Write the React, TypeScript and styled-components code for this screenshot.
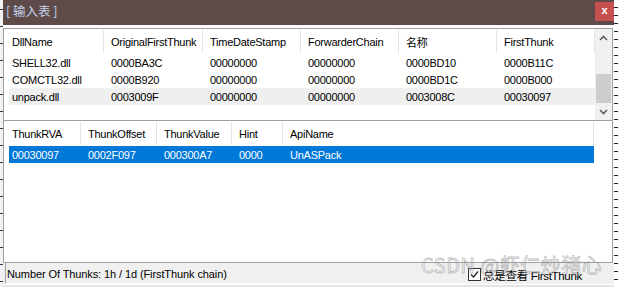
import React from "react";
import styled, { createGlobalStyle } from "styled-components";

const UI = `"Liberation Sans", "Noto Sans CJK SC", Arial, sans-serif`;
const CJK = `"Noto Sans CJK SC", "Liberation Sans", sans-serif`;

const Global = createGlobalStyle`
  html, body { margin: 0; padding: 0; background: #ffffff; }
  body { font-family: ${UI}; font-size: 11px; letter-spacing: -0.25px; color: #000; }
  * { box-sizing: border-box; }
`;

const Screen = styled.div`
  position: relative;
  width: 618px;
  height: 287px;
  display: flex;
  overflow: hidden;
`;

const LeftEdge = styled.div`
  width: 3px;
  background: repeating-linear-gradient(180deg, #f2f2f2 0 9px, #3a3a3a 9px 10px, #f2f2f2 10px 17px);
`;

const RightEdge = styled.div`
  width: 4px;
  background: repeating-linear-gradient(180deg, #ffffff 0 7px, #202020 7px 8px);
`;

const Dialog = styled.div`
  width: 611px;
  display: flex;
  flex-direction: column;
  background: #fbfbfb;
`;

const TitleBar = styled.div`
  height: 25px;
  flex: none;
  background: #5e4a48;
  display: flex;
  align-items: center;
  justify-content: space-between;
  padding-left: 3px;
`;

const TitleText = styled.span`
  font-family: ${CJK};
  font-size: 12.5px;
  color: #c3d4ee;
  letter-spacing: 0;
  line-height: 1;
  margin-top: -2px;
`;

const CloseButton = styled.div`
  width: 19px;
  height: 19px;
  margin-top: -3px;
  background: #c65050;
  color: #ffffff;
  font-family: "Liberation Sans", sans-serif;
  font-weight: bold;
  font-size: 11px;
  letter-spacing: 0;
  display: flex;
  align-items: center;
  justify-content: center;
  padding-bottom: 2px;
`;

const Spacer = styled.div`
  height: 3px;
  flex: none;
  background: #fbfbfb;
`;

const ListBox = styled.div<{ $h: number; $bottom?: boolean }>`
  height: ${(p) => p.$h}px;
  flex: none;
  border: 1px solid #a0a0a0;
  border-bottom: ${(p) => (p.$bottom ? "1px solid #a0a0a0" : "none")};
  margin-right: 1px;
  background: #ffffff;
  display: flex;
`;

const ListMain = styled.div`
  flex: 1;
  display: flex;
  flex-direction: column;
`;

const HeaderRow = styled.div`
  height: 25px;
  display: flex;
  flex: none;
`;

const HeaderCell = styled.div<{ $w: number; $pl: number }>`
  position: relative;
  width: ${(p) => p.$w}px;
  flex: none;
  padding-left: ${(p) => p.$pl}px;
  display: flex;
  align-items: center;
  white-space: nowrap;
  overflow: hidden;
  color: #000;
  &::after {
    content: "";
    position: absolute;
    right: 0;
    top: 1px;
    bottom: 1px;
    width: 1px;
    background: #e5e5e5;
  }
`;

const Row = styled.div<{ $bg?: string; $fg?: string }>`
  height: 17px;
  display: flex;
  flex: none;
  margin-left: 5px;
  background: ${(p) => p.$bg || "transparent"};
  color: ${(p) => p.$fg || "#000"};
`;

const Cell = styled.div<{ $w: number; $pl: number }>`
  width: ${(p) => p.$w}px;
  flex: none;
  padding-left: ${(p) => p.$pl}px;
  display: flex;
  align-items: center;
  white-space: nowrap;
`;

const Scrollbar = styled.div`
  width: 17px;
  flex: none;
  background: #f0f0f0;
  display: flex;
  flex-direction: column;
  align-items: center;
`;

const ScrollArrow = styled.div`
  height: 17px;
  width: 100%;
  flex: none;
  display: flex;
  align-items: center;
  justify-content: center;
`;

const ScrollTrack = styled.div`
  flex: 1;
  width: 100%;
  display: flex;
  flex-direction: column;
  justify-content: flex-end;
  padding: 0 1px;
`;

const ScrollThumb = styled.div`
  height: 29px;
  width: 100%;
  background: #cdcdcd;
`;

const SideGap = styled.div`
  width: 18px;
  flex: none;
`;

const StatusBar = styled.div`
  height: 21px;
  flex: none;
  background: #f0f0f0;
  display: flex;
  align-items: center;
  padding-left: 2px;
`;

const StatusPanel = styled.div`
  height: 100%;
  width: 460px;
  border-left: 1px solid #a0a0a0;
  border-bottom: 1px solid #ffffff;
  display: flex;
  align-items: center;
  padding-left: 1px;
  padding-top: 1px;
  letter-spacing: -0.1px;
`;

const CheckWrap = styled.label`
  display: flex;
  align-items: center;
  gap: 2px;
  margin-left: 3px;
  padding-top: 2px;
`;

const CheckText = styled.span`
  font-family: ${UI};
  font-size: 11.5px;
  letter-spacing: -0.3px;
`;

const BottomStrip = styled.div`
  flex: 1;
  background: #e4e4e4;
  border-top: 1px solid #ffffff;
`;

const Watermark = styled.div`
  position: absolute;
  left: 421px;
  top: 255px;
  font-family: ${CJK};
  font-size: 20px;
  line-height: 1;
  color: rgba(255, 255, 255, 0.3);
  -webkit-text-stroke: 0.8px rgba(110, 110, 110, 0.45);
  letter-spacing: 0.5px;
  white-space: nowrap;
  pointer-events: none;
`;

type Col = { label: string; w: number };

const topCols: Col[] = [
  { label: "DllName", w: 100 },
  { label: "OriginalFirstThunk", w: 99 },
  { label: "TimeDateStamp", w: 98 },
  { label: "ForwarderChain", w: 98 },
  { label: "名称", w: 98 },
  { label: "FirstThunk", w: 98 },
];

const topRows = [
  ["SHELL32.dll", "0000BA3C", "00000000", "00000000", "0000BD10", "0000B11C"],
  ["COMCTL32.dll", "0000B920", "00000000", "00000000", "0000BD1C", "0000B000"],
  ["unpack.dll", "0003009F", "00000000", "00000000", "0003008C", "00030097"],
];

const bottomCols: Col[] = [
  { label: "ThunkRVA", w: 77 },
  { label: "ThunkOffset", w: 76 },
  { label: "ThunkValue", w: 75 },
  { label: "Hint", w: 51 },
  { label: "ApiName", w: 311 },
];

const bottomRows = [["00030097", "0002F097", "000300A7", "0000", "UnASPack"]];

const Chevron = ({ up }: { up?: boolean }) => (
  <svg width="9" height="6" viewBox="0 0 9 6">
    <path
      d={up ? "M1 5 L4.5 1.5 L8 5" : "M1 1 L4.5 4.5 L8 1"}
      fill="none"
      stroke="#606060"
      strokeWidth="1.6"
    />
  </svg>
);

const CheckIcon = () => (
  <svg width="13" height="13" viewBox="0 0 13 13">
    <rect x="0.5" y="0.5" width="12" height="12" fill="#ffffff" stroke="#333333" />
    <path d="M3 6.5 L5.5 9 L10 3.5" fill="none" stroke="#222222" strokeWidth="1.3" />
  </svg>
);

const Header = ({ cols }: { cols: Col[] }) => (
  <HeaderRow>
    {cols.map((c, i) => (
      <HeaderCell key={c.label} $w={c.w} $pl={i === 0 ? 8 : 7}>
        {c.label}
      </HeaderCell>
    ))}
  </HeaderRow>
);

const DataRow = ({ cols, cells, bg, fg }: { cols: Col[]; cells: string[]; bg?: string; fg?: string }) => (
  <Row $bg={bg} $fg={fg}>
    {cells.map((v, i) => (
      <Cell key={i} $w={i === 0 ? cols[i].w - 5 : cols[i].w} $pl={i === 0 ? 3 : 7}>
        {v}
      </Cell>
    ))}
  </Row>
);

export default function App() {
  return (
    <>
      <Global />
      <Screen>
        <LeftEdge />
        <Dialog>
          <TitleBar>
            <TitleText>[ 输入表 ]</TitleText>
            <CloseButton>x</CloseButton>
          </TitleBar>
          <Spacer />
          <ListBox $h={92}>
            <ListMain>
              <Header cols={topCols} />
              {topRows.map((r, i) => (
                <DataRow key={i} cols={topCols} cells={r} bg={i === 2 ? "#efefef" : undefined} />
              ))}
            </ListMain>
            <Scrollbar>
              <ScrollArrow>
                <Chevron up />
              </ScrollArrow>
              <ScrollTrack>
                <ScrollThumb />
              </ScrollTrack>
              <ScrollArrow>
                <Chevron />
              </ScrollArrow>
            </Scrollbar>
          </ListBox>
          <ListBox $h={143} $bottom>
            <ListMain>
              <Header cols={bottomCols} />
              {bottomRows.map((r, i) => (
                <DataRow key={i} cols={bottomCols} cells={r} bg="#0078d7" fg="#ffffff" />
              ))}
            </ListMain>
            <SideGap />
          </ListBox>
          <StatusBar>
            <StatusPanel>Number Of Thunks: 1h / 1d (FirstThunk chain)</StatusPanel>
            <CheckWrap>
              <CheckIcon />
              <CheckText>总是查看 FirstThunk</CheckText>
            </CheckWrap>
          </StatusBar>
          <BottomStrip />
        </Dialog>
        <RightEdge />
        <Watermark>CSDN @虾仁炒猪心</Watermark>
      </Screen>
    </>
  );
}
